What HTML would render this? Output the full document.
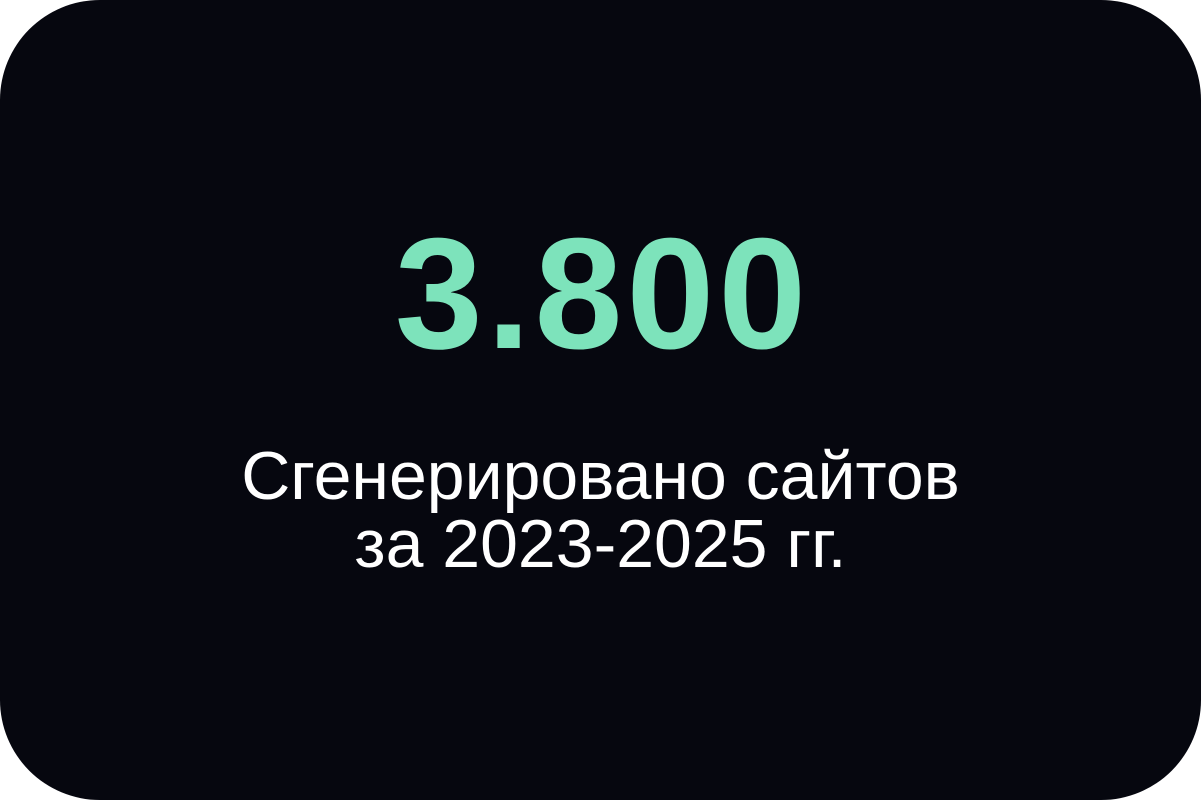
<!DOCTYPE html>
<html><head><meta charset="utf-8"><style>
html,body{margin:0;padding:0;background:#fff;width:1201px;height:800px;overflow:hidden}
.card{position:absolute;left:0;top:0;width:1201px;height:800px;background:#06070f;border-radius:100px}
.num{position:absolute;left:0;width:1201px;top:204px;text-align:center;font-family:"Liberation Sans",sans-serif;font-weight:bold;font-size:158px;line-height:180px;color:#7de3bb;letter-spacing:4px;text-indent:4px}
.sub{position:absolute;left:0;width:1201px;top:442px;text-align:center;font-family:"Liberation Sans",sans-serif;font-size:68px;line-height:68px;color:#fff}
</style></head><body>
<div class="card"></div>
<div class="num">3.800</div>
<div class="sub">Сгенерировано сайтов<br>за 2023-2025 гг.</div>
</body></html>
